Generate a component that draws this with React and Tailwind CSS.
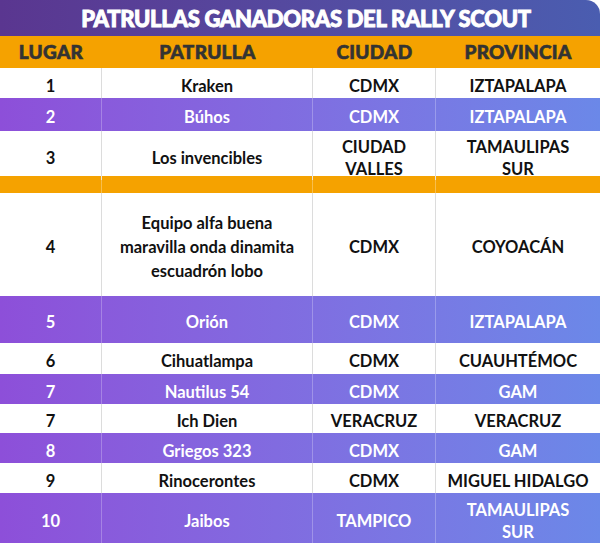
import React from 'react';

const rows = [
    { lugar: '1', patrulla: ['Kraken'], ciudad: ['CDMX'], provincia: ['IZTAPALAPA'], h: 'h-[30px]' },
    { lugar: '2', patrulla: ['Búhos'], ciudad: ['CDMX'], provincia: ['IZTAPALAPA'], h: 'h-[33px]', purple: true },
    { lugar: '3', patrulla: ['Los invencibles'], ciudad: ['CIUDAD', 'VALLES'], provincia: ['TAMAULIPAS', 'SUR'], h: 'h-[45px]' },
    { spacer: true },
    { lugar: '4', patrulla: ['Equipo alfa buena', 'maravilla onda dinamita', 'escuadrón lobo'], ciudad: ['CDMX'], provincia: ['COYOACÁN'], h: 'h-[103px]', tall: true },
    { lugar: '5', patrulla: ['Orión'], ciudad: ['CDMX'], provincia: ['IZTAPALAPA'], h: 'h-[47px]', purple: true },
    { lugar: '6', patrulla: ['Cihuatlampa'], ciudad: ['CDMX'], provincia: ['CUAUHTÉMOC'], h: 'h-[31px]' },
    { lugar: '7', patrulla: ['Nautilus 54'], ciudad: ['CDMX'], provincia: ['GAM'], h: 'h-[30px]', purple: true },
    { lugar: '7', patrulla: ['Ich Dien'], ciudad: ['VERACRUZ'], provincia: ['VERACRUZ'], h: 'h-[29px]' },
    { lugar: '8', patrulla: ['Griegos 323'], ciudad: ['CDMX'], provincia: ['GAM'], h: 'h-[30px]', purple: true },
    { lugar: '9', patrulla: ['Rinocerontes'], ciudad: ['CDMX'], provincia: ['MIGUEL HIDALGO'], h: 'h-[30px]' },
    { lugar: '10', patrulla: ['Jaibos'], ciudad: ['TAMPICO'], provincia: ['TAMAULIPAS', 'SUR'], h: 'h-[50px]', purple: true },
];

function Cell({ lines, purple, tall, last }) {
    return (
        <div className={`flex flex-col items-center justify-center text-center pt-[5px] ${last ? '' : purple ? 'border-r border-white/25' : 'border-r border-[#dcdcdc]'}`}>
            {lines.map((l, i) => (
                <span key={i} className={tall ? 'leading-[24px]' : 'leading-[22px]'}>{l}</span>
            ))}
        </div>
    );
}

export default function App() {
    return (
        <div className="w-[600px] h-[543px] overflow-hidden bg-white font-['Lato','Liberation_Sans',sans-serif]">
            {/* Title */}
            <div className="h-[36px] flex items-center justify-center pl-[12px] rounded-tr-[14px] bg-linear-to-r from-[#5a3690] to-[#4a5db0]">
                <h1 className="text-white font-black text-[22px] tracking-[-0.3px] leading-none pt-[1px] [-webkit-text-stroke:0.9px_#fff]">
                    PATRULLAS GANADORAS DEL RALLY SCOUT
                </h1>
            </div>

            {/* Header */}
            <div className="grid grid-cols-[102px_211px_123px_1fr] h-[32px] bg-[#f5a200] text-[#333] font-black text-[19px] tracking-[0.3px] [-webkit-text-stroke:0.6px_#333]">
                <div className="flex items-center justify-center pt-[1px]">LUGAR</div>
                <div className="flex items-center justify-center pt-[1px]">PATRULLA</div>
                <div className="flex items-center justify-center pt-[1px]">CIUDAD</div>
                <div className="flex items-center justify-center pt-[1px]">PROVINCIA</div>
            </div>

            {/* Rows */}
            {rows.map((r, i) => {
                if (r.spacer) {
                    return (
                        <div key={i} className="grid grid-cols-[102px_211px_123px_1fr] h-[17px] bg-[#f5a200]">
                            <div className="border-r border-white/30" />
                            <div className="border-r border-white/30" />
                            <div className="border-r border-white/30" />
                            <div />
                        </div>
                    );
                }
                return (
                    <div
                        key={i}
                        className={`grid grid-cols-[102px_211px_123px_1fr] ${r.h} font-bold text-[16.5px] ${r.purple ? 'bg-linear-to-r from-[#8d4fd9] to-[#6b88e8] text-white' : 'bg-white text-[#111]'}`}
                    >
                        <Cell lines={[r.lugar]} purple={r.purple} tall={r.tall} />
                        <Cell lines={r.patrulla} purple={r.purple} tall={r.tall} />
                        <Cell lines={r.ciudad} purple={r.purple} tall={r.tall} />
                        <Cell lines={r.provincia} purple={r.purple} tall={r.tall} last />
                    </div>
                );
            })}
        </div>
    );
}
